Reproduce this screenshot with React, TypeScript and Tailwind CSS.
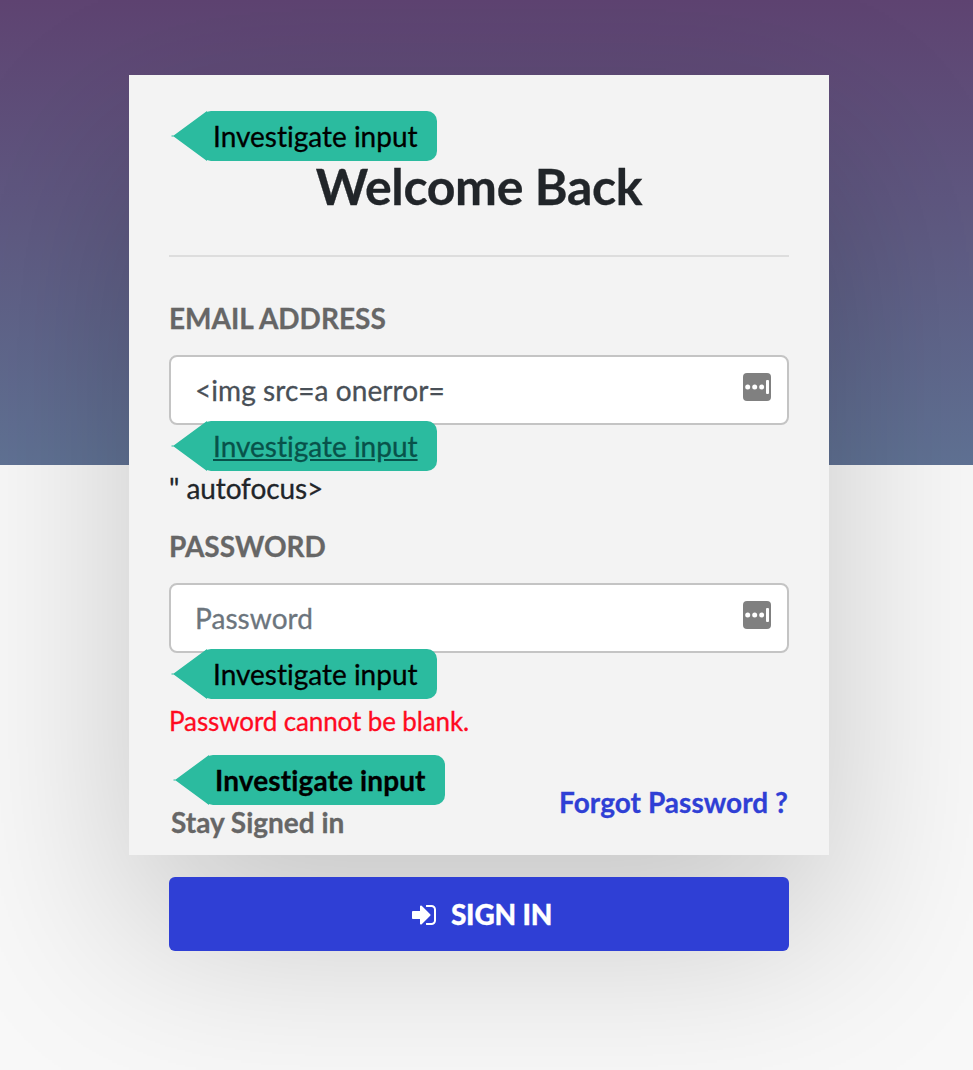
function Tag({ className = "" }: { className?: string }) {
  return (
    <div className={"relative z-10 flex h-[50px] w-fit items-center " + className}>
      <svg className="-mr-[6px] block h-[50px] w-[38px] shrink-0" viewBox="0 0 38 50" fill="#2bbb9f">
        <path d="M4 25 38 0V50ZM2.5 24.5h2v1h-2Z" />
      </svg>
      <div className="flex h-[50px] items-center rounded-[10px] bg-[#2bbb9f] pr-[19px] pl-[12px] whitespace-nowrap">
        Investigate input
      </div>
    </div>
  );
}

function FieldIcon() {
  return (
    <svg className="absolute top-[18px] right-[18px] h-7 w-7" viewBox="0 0 28 28">
      <rect width="28" height="28" rx="4" fill="#808080" />
      <g fill="#fff">
        <circle cx="4.7" cy="14" r="2.5" />
        <circle cx="11.7" cy="14" r="2.5" />
        <circle cx="18.7" cy="14" r="2.5" />
        <rect x="23" y="7" width="3" height="14" rx="1" />
      </g>
    </svg>
  );
}

function Field({ type, value, placeholder, color }: { type: string; value?: string; placeholder?: string; color: string }) {
  return (
    <div className="relative h-[70px]">
      <input
        type={type}
        defaultValue={value}
        placeholder={placeholder}
        className={"block h-[70px] w-full rounded-[8px] border-2 border-[#c4c4c4] bg-white pl-[24px] tracking-[0.06px] outline-none placeholder:text-[#6c757d] " + color}
      />
      <FieldIcon />
    </div>
  );
}

export default function App() {
  return (
    <div className="h-[1070px] w-full overflow-hidden bg-[linear-gradient(#5e4371_0px,#607294_465px,#f8f8f8_465px)] pt-[75px] pl-[129px] font-['Lato',sans-serif] text-[28px] leading-[42px] text-[#212529] [-webkit-text-stroke-width:0.3px] [font-variant-ligatures:none]">
      <main className="h-[780px] w-[700px] bg-[#f3f3f3] px-[40px] pt-[36px] shadow-[0_80px_180px_rgba(0,0,0,0.2)]">
        <Tag className="text-black" />
        <h1 className="-mt-[2px] h-[56px] text-center text-[50px] leading-[54px] font-bold tracking-[-0.35px]">Welcome Back</h1>
        <hr className="mt-[40px] border-t-2 border-[#dddddd]" />
        <label className="mt-[40px] mb-[16px] block font-bold text-[#666]">EMAIL ADDRESS</label>
        <Field type="text" value="<img src=a onerror=" color="text-[#495057]" />
        <Tag className="-mt-1 text-[#08524a] underline" />
        <p className="-mt-[4px] tracking-[-0.08px]">" autofocus&gt;</p>
        <label className="mt-[16px] mb-[16px] block font-bold text-[#666]">PASSWORD</label>
        <Field type="password" placeholder="Password" color="text-[#495057]" />
        <Tag className="-mt-1 text-black" />
        <p className="mt-[2px] text-[26px] leading-[40px] tracking-[-0.12px] text-[#ff0a1f]">Password cannot be blank.</p>
        <div className="mt-[14px] flex h-[122px] justify-between font-bold">
          <div>
            <Tag className="ml-[2px] tracking-[0.12px] text-black" />
            <label className="-mt-[4px] block pl-[2px] text-[#666]">Stay Signed in</label>
          </div>
          <a className="pt-[26px] pr-[1px] tracking-[0.04px] text-[#2f3fd5]">Forgot Password ?</a>
        </div>
        <button className="flex h-[74px] w-full items-center justify-center rounded-[6px] bg-[#2f3fd5] pl-[6px] font-black tracking-[-0.2px] text-white">
          <svg className="mt-px mr-[15px] h-7 w-6" viewBox="0 0 1536 1792" fill="currentColor">
            <path d="M1184 896q0 26-19 45l-544 544q-19 19-45 19t-45-19-19-45v-288h-448q-26 0-45-19t-19-45v-384q0-26 19-45t45-19h448v-288q0-26 19-45t45-19 45 19l544 544q19 19 19 45zm352-352v704q0 119-84.5 203.5t-203.5 84.5h-320q-13 0-22.5-9.5t-9.5-22.5q0-4-1-20t-.5-26.5 3-23.5 10-19.5 20.5-6.5h320q66 0 113-47t47-113v-704q0-66-47-113t-113-47h-312l-11.5-1-11.5-3-8-5.5-7-9-2-13.5q0-4-1-20t-.5-26.5 3-23.5 10-19.5 20.5-6.5h320q119 0 203.5 84.5t84.5 203.5z" />
          </svg>
          SIGN IN
        </button>
      </main>
    </div>
  );
}
